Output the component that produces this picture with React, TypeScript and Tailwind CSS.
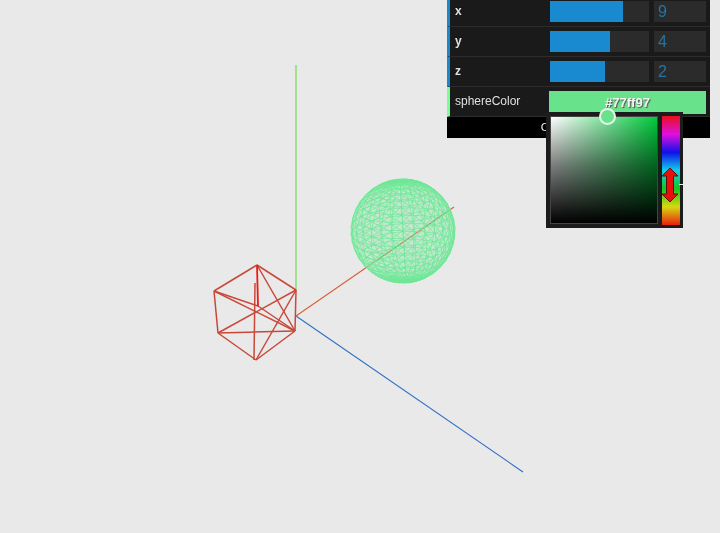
// sphere wireframe: uv sphere split into triangles, tilted slightly, flat projection
function spherePath(cx: number, cy: number, r: number) {
  const latN = 20
  const lonN = 28
  const rotX = 0.3
  const rotZ = 0.06
  const pt = (i: number, j: number) => {
    const th = (i / latN) * Math.PI
    const ph = (j / lonN) * Math.PI * 2
    const x = Math.sin(th) * Math.cos(ph)
    const y = Math.cos(th)
    const z = Math.sin(th) * Math.sin(ph)
    const y2 = y * Math.cos(rotX) - z * Math.sin(rotX)
    const x3 = x * Math.cos(rotZ) - y2 * Math.sin(rotZ)
    const y3 = x * Math.sin(rotZ) + y2 * Math.cos(rotZ)
    return `${(cx + x3 * r).toFixed(1)} ${(cy - y3 * r).toFixed(1)}`
  }
  let d = ''
  for (let i = 0; i < latN; i++) {
    for (let j = 0; j < lonN; j++) {
      d += `M${pt(i, j)}L${pt(i, j + 1)}M${pt(i, j)}L${pt(i + 1, j)}M${pt(i, j)}L${pt(i + 1, j + 1)}`
    }
  }
  return d
}

const cube: [number, number, number, number][] = [
  [257, 265, 214, 291],
  [257, 265, 296, 290],
  [214, 291, 218, 333],
  [218, 333, 256, 360],
  [256, 360, 295, 331],
  [295, 331, 296, 290],
  [214, 291, 295, 331],
  [218, 333, 295, 331],
  [218, 333, 296, 290],
  [257, 265, 295, 331],
  [256, 360, 296, 290],
  [255, 283, 254, 360],
  [214, 291, 258, 306],
  [258, 306, 295, 331],
]

function Scene() {
  return (
    <svg width="720" height="533" viewBox="0 0 720 533" className="absolute inset-0 blur-[0.5px]">
      <line x1="296" y1="65" x2="296" y2="291" stroke="#8edb6e" strokeWidth="1.5" />
      <line x1="296" y1="316" x2="523" y2="472" stroke="#2f6fc4" strokeWidth="1.1" />
      <line x1="296" y1="316" x2="454" y2="207" stroke="#d9623a" strokeWidth="1.2" />
      <circle cx="403" cy="231" r="51" fill="#6ee896" opacity="0.3" />
      <path d={spherePath(403, 231, 52)} fill="none" stroke="#6ee896" strokeWidth="0.9" opacity="0.8" />
      <g stroke="#c8483a" strokeWidth="1.5">
        {cube.map(([x1, y1, x2, y2], i) => (
          <line key={i} x1={x1} y1={y1} x2={x2} y2={y2} />
        ))}
      </g>
      <line x1="257" y1="265" x2="258" y2="306" stroke="#f01c10" strokeWidth="1.8" />
    </svg>
  )
}

function NumberRow({ label, fill, value }: { label: string; fill: number; value: string }) {
  return (
    <div className="flex h-[30px] items-start border-b border-l-[3px] border-b-[#2c2c2c] border-l-[#1a88cc] pt-[4px]">
      <span className="w-[100px] pl-[5px] pt-[2px] text-[12px] font-bold leading-[16px] text-[#e0e0e0] [text-shadow:0_-1px_0_#111]">
        {label}
      </span>
      <div className="h-[21px] w-[99px] bg-[#2b2b2b]">
        <div className="h-full bg-[#1a8ad0]" style={{ width: fill }} />
      </div>
      <span className="ml-[5px] h-[21px] w-[52px] bg-[#2b2b2b] pl-[4px] text-[16px] leading-[21px] text-[#27749f]">
        {value}
      </span>
    </div>
  )
}

function Picker() {
  return (
    <div className="absolute left-[96px] top-[25px] z-10 flex h-[116px] w-[137px] gap-[4px] bg-[#1c1c1c] pl-[4px] pt-[4px]">
      <div className="relative h-[108px] w-[108px] border border-[#444] bg-[linear-gradient(to_bottom,transparent,rgba(0,0,0,0.5)_45%,#000),linear-gradient(to_right,#fff,#00c93c)]">
        <div className="absolute left-[48px] top-[-9px] h-[17px] w-[17px] rounded-full border-2 border-[#e6f5e8] bg-[#68e38c]" />
      </div>
      <div className="relative h-[109px] w-[18px] bg-[linear-gradient(to_bottom,#e8101c,#e010e0,#1010e8,#10d0e8,#10c820,#d8d810,#e82010)]">
        <div className="absolute left-[17px] top-[68px] h-[1px] w-[4px] bg-[#eee]" />
        <svg width="18" height="36" viewBox="0 0 18 36" className="absolute left-0 top-[51px]">
          <path d="M8 1 L16 9 L11.5 9 L11.5 27 L16 27 L8 35 L0 27 L4.5 27 L4.5 9 L0 9 Z" fill="#e8100c" stroke="#5a1008" strokeWidth="1" />
        </svg>
      </div>
    </div>
  )
}

function ColorRow() {
  return (
    <div className="relative flex h-[30px] items-start border-b border-l-[3px] border-b-[#2c2c2c] border-l-[#77ff97] pt-[4px]">
      <span className="w-[99px] pl-[5px] pt-[2px] text-[12px] font-normal leading-[16px] text-[#e0e0e0] [text-shadow:0_-1px_0_#111]">
        sphereColor
      </span>
      <div className="h-[23px] w-[157px] bg-[#68e38c] text-center text-[13px] font-bold leading-[23px] text-[#f4f4f4] [text-shadow:1px_1px_1px_#555]">
        #77ff97
      </div>
      <Picker />
    </div>
  )
}

export default function App() {
  return (
    <div className="relative h-[533px] w-[720px] overflow-hidden bg-[#e9e9e9] font-['Liberation_Sans',sans-serif]">
      <Scene />
      <div className="absolute left-[447px] top-[-3px] w-[263px] bg-[#1a1a1a] blur-[0.3px]">
        <NumberRow label="x" fill={73} value="9" />
        <NumberRow label="y" fill={60} value="4" />
        <NumberRow label="z" fill={55} value="2" />
        <ColorRow />
        <div className="h-[21px] bg-black text-center text-[11.5px] leading-[20px] text-[#eee]">Close Controls</div>
      </div>
    </div>
  )
}
